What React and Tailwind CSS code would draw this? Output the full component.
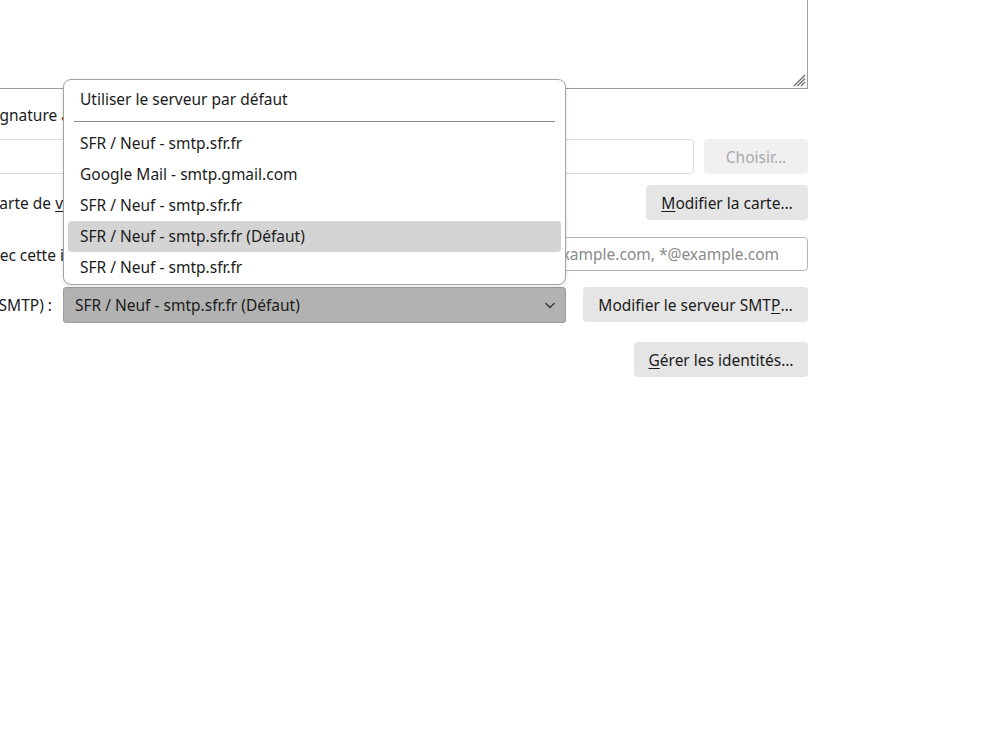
// App.jsx — identity settings pane with the outgoing (SMTP) server list open

import React from 'react';

const FONT = 'font-["Noto_Sans","Open_Sans","Liberation_Sans",sans-serif]';

const SERVERS = [
  { id: 1, label: 'SFR / Neuf - smtp.sfr.fr' },
  { id: 2, label: 'Google Mail - smtp.gmail.com' },
  { id: 3, label: 'SFR / Neuf - smtp.sfr.fr' },
  { id: 4, label: 'SFR / Neuf - smtp.sfr.fr (Défaut)', active: true },
  { id: 5, label: 'SFR / Neuf - smtp.sfr.fr' },
];

function Button({ children, className = '', disabled = false }) {
  return (
    <div
      className={
        'flex h-[35px] shrink-0 items-center justify-center rounded-[4px] pt-[3px] whitespace-nowrap ' +
        (disabled ? 'bg-[#f0f0f0] text-[#ababab] ' : 'bg-[#e5e5e5] text-[#1b1b1b] ') +
        className
      }
    >
      {children}
    </div>
  );
}

// Label column: text is right-aligned against a fixed edge, the start runs off the page.
function Label({ width, children }) {
  return (
    <div className={`flex shrink-0 justify-end overflow-hidden pt-[3px] whitespace-nowrap ${width}`}>
      <span>{children}</span>
    </div>
  );
}

function ResizeGrip() {
  return (
    <svg className="absolute right-[1px] bottom-[1px]" width="14" height="14" viewBox="0 0 14 14" stroke="#6b6b6b" strokeWidth="1.2">
      <line x1="13" y1="2" x2="2" y2="13" />
      <line x1="13" y1="5.5" x2="5.5" y2="13" />
      <line x1="13" y1="9" x2="9" y2="13" />
    </svg>
  );
}

function ServerPopup() {
  return (
    <div className="absolute left-[63px] top-[79px] w-[503px] rounded-[8px] border border-[#a3a3a3] bg-white pt-[4px] pb-[1px] shadow-[0_1px_4px_rgba(0,0,0,0.12)]">
      <div className="mx-1 flex h-[31px] items-center pl-3">Utiliser le serveur par défaut</div>
      <div className="mx-[10px] my-[6px] h-px bg-[#8c8c8c]" />
      {SERVERS.map((s) => (
        <div
          key={s.id}
          className={
            'mx-1 flex h-[31px] items-center rounded-[4px] pt-[1px] pl-3 ' +
            (s.active ? 'bg-[#d4d4d4]' : '')
          }
        >
          {s.label}
        </div>
      ))}
    </div>
  );
}

export default function App() {
  return (
    <div className={`relative h-[750px] w-[1000px] overflow-hidden bg-white text-[15.5px] text-[#1b1b1b] ${FONT}`}>
      <div className="flex w-[808px] flex-col">
        {/* Signature text area (top and left edges scrolled away) */}
        <div className="relative -mt-[2px] h-[91px] w-full border-r border-b border-[#9d9d9d]">
          <ResizeGrip />
        </div>

        {/* Attach signature from file */}
        <div className="mt-[10px] flex h-[30px] items-center">
          <Label width="w-[70px]">Joindre la signature à</Label>
        </div>

        {/* File path + choose */}
        <div className="mt-[10px] flex h-[35px] items-center gap-[10px]">
          <div className="-ml-[4px] h-[35px] flex-1 rounded-[4px] border border-[#dcdcdc]" />
          <Button disabled className="w-[104px]">Choisir…</Button>
        </div>

        {/* Business card */}
        <div className="mt-[11px] flex h-[35px] items-center justify-between">
          <Label width="w-[63px]">
            Joindre ma carte de <span className="underline underline-offset-2">v</span>
          </Label>
          <Button className="w-[162px]">
            <span className="underline underline-offset-2">M</span>odifier la carte…
          </Button>
        </div>

        {/* Reply-from identity */}
        <div className="mt-[17px] flex h-[34px] items-center">
          <Label width="w-[64px]">Répondre avec cette i</Label>
          <div className="ml-[300px] flex h-[34px] flex-1 items-center justify-end overflow-hidden rounded-[4px] border border-[#b5b5b5] pt-[2px] pr-[28px] whitespace-nowrap text-[#8a8a8a]">
            ex. : *@example.com, *@example.com
          </div>
        </div>

        {/* Outgoing server */}
        <div className="mt-[16px] flex h-[35px] items-center">
          <Label width="w-[52px]">Serveur sortant (SMTP) :</Label>
          <div className="ml-[11px] flex h-[36px] w-[503px] items-center justify-between rounded-[3px] border border-[#9c9c9c] bg-[#b2b2b2] pt-[3px] pr-[8px] pl-[11px]">
            <span>SFR / Neuf - smtp.sfr.fr (Défaut)</span>
            <svg className="-mt-[3px]" width="14" height="14" viewBox="0 0 14 14" fill="none" stroke="#3a3a3a" strokeWidth="1.4">
              <path d="M2.5 5l4.5 4.5L11.5 5" />
            </svg>
          </div>
          <Button className="ml-auto w-[225px]">
            Modifier le serveur SMT<span className="underline underline-offset-2">P</span>…
          </Button>
        </div>

        {/* Manage identities */}
        <div className="mt-[20px] flex h-[35px] items-center justify-end">
          <Button className="w-[174px]">
            <span className="underline underline-offset-2">G</span>érer les identités…
          </Button>
        </div>
      </div>

      <ServerPopup />
    </div>
  );
}
